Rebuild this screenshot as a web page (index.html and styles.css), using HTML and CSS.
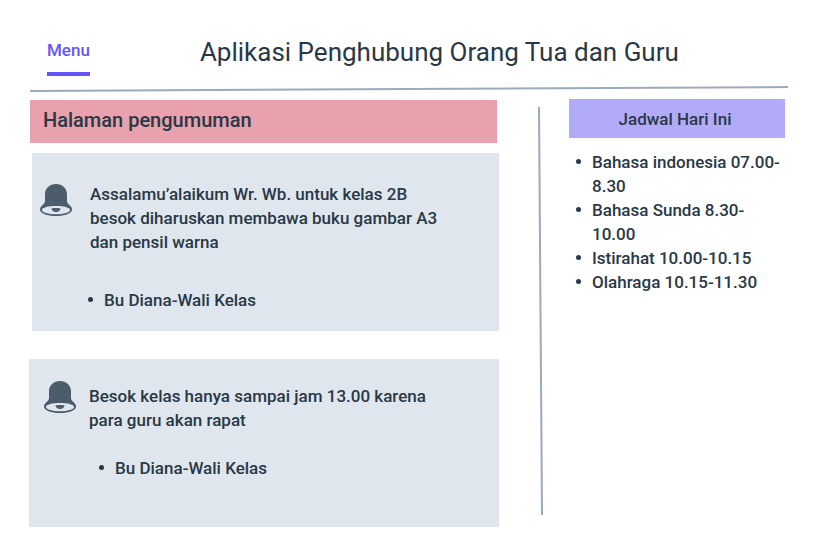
FILE: index.html
```html
<!DOCTYPE html>
<html lang="id">
<head>
  <meta charset="utf-8">
  <meta name="viewport" content="width=device-width, initial-scale=1">
  <title>Aplikasi Penghubung Orang Tua dan Guru</title>
  <link rel="stylesheet" href="styles.css">
</head>
<body>
  <svg class="symbols" aria-hidden="true">
    <symbol id="bell" viewBox="0 0 32 32">
      <path fill-rule="evenodd" d="M16 0C9.500 0 5 4.500 5 10.500V17C5 19 3.600 20 2 21.500C.7 22.700 0 24 0 25.500C0 29.500 7 32 16 32S32 29.500 32 25.500C32 24 31.300 22.700 30 21.500C28.400 20 27 19 27 17V10.500C27 4.500 22.500 0 16 0ZM16 22C23.500 22 30 23.500 30 26S23.500 30.300 16 30.300S2 28.500 2 26S8.500 22 16 22Z"/>
      <path d="M11.500 24.300Q16 23.500 20.500 24.300C20.500 26.600 18.500 28 16 28S11.500 26.600 11.500 24.300Z"/>
    </symbol>
  </svg>

  <header class="header">
    <nav><a class="menu" href="#">Menu</a></nav>
    <h1 class="title">Aplikasi Penghubung Orang Tua dan Guru</h1>
  </header>
  <svg class="rule" viewBox="0 0 758 6" preserveAspectRatio="none" aria-hidden="true">
    <line x1="0" y1="5" x2="758" y2="1"/>
  </svg>

  <main class="content">
    <section class="news">
      <h2 class="news-title">Halaman pengumuman</h2>
      <article class="card card-first">
        <svg class="bell" aria-hidden="true"><use href="#bell"/></svg>
        <div class="card-body">
          <p>Assalamu’alaikum Wr. Wb. untuk kelas 2B besok diharuskan membawa buku gambar A3 dan pensil warna</p>
          <ul class="list author"><li>Bu Diana-Wali Kelas</li></ul>
        </div>
      </article>
      <article class="card card-second">
        <svg class="bell" aria-hidden="true"><use href="#bell"/></svg>
        <div class="card-body">
          <p>Besok kelas hanya sampai jam 13.00 karena para guru akan rapat</p>
          <ul class="list author"><li>Bu Diana-Wali Kelas</li></ul>
        </div>
      </article>
    </section>
    <svg class="divider" viewBox="0 0 6 408" preserveAspectRatio="none" aria-hidden="true">
      <line x1="1" y1="0" x2="4" y2="408"/>
    </svg>
    <aside class="schedule">
      <h2 class="schedule-title">Jadwal Hari Ini</h2>
      <ul class="list">
        <li>Bahasa indonesia 07.00-&#8203;8.30</li>
        <li>Bahasa Sunda 8.30-&#8203;10.00</li>
        <li>Istirahat 10.00-10.15</li>
        <li>Olahraga 10.15-11.30</li>
      </ul>
    </aside>
  </main>
</body>
</html>
```
FILE: styles.css
```css
* {
  box-sizing: border-box;
}

body {
  margin: 0;
  background: #fff;
  color: #293845;
  font: 500 17px/24px Roboto, "Liberation Sans", sans-serif;
}

h1, h2, p, ul {
  margin: 0;
  padding: 0;
}

.symbols {
  position: absolute;
  width: 0;
  height: 0;
}

.header {
  display: flex;
  align-items: flex-start;
  gap: 110px;
  padding: 36px 32px 10px 47px;
}

.menu {
  display: block;
  padding: 2px 0 10px;
  border-bottom: 4px solid #6554f5;
  color: #6554f5;
  text-decoration: none;
}

.title {
  font-size: 26px;
  font-weight: 400;
  line-height: 32px;
}

.rule {
  display: block;
  width: calc(100% - 62px);
  height: 6px;
  margin-left: 30px;
}

.rule line,
.divider line {
  stroke: #9dabb9;
  stroke-width: 2;
}

.content {
  display: grid;
  grid-template-columns: minmax(0, 1fr) 6px 216px;
  column-gap: 25px;
  padding: 7px 35px 22px 29px;
}

.news {
  margin: 1px 14px 0 0;
}

.news-title {
  margin: 0 2px 10px 1px;
  padding: 4px 13px 7px;
  background: #e9a1ad;
  font-size: 20px;
  font-weight: 500;
  line-height: 32px;
}

.card {
  display: flex;
  background: #dfe6ee;
}

.card-first {
  min-height: 178px;
  margin: 0 0 28px 3px;
  padding: 29px 48px 18px 8px;
  gap: 18px;
}

.card-second {
  min-height: 168px;
  padding: 22px 48px 46px 15px;
  gap: 13px;
}

.bell {
  flex: none;
  width: 32px;
  height: 32px;
  fill: #4b5c6b;
}

.card-first .bell {
  margin-top: 2px;
}

.card-body {
  flex: 1;
}

.card-second .card-body {
  padding-top: 3px;
}

.list {
  padding-left: 23px;
  list-style: none;
}

.list li::before {
  content: "";
  float: left;
  width: 5px;
  height: 5px;
  margin: 9px 0 0 -16px;
  border-radius: 50%;
  background: #293845;
}

.author {
  margin-top: 34px;
  padding-left: 14px;
}

.card-second .author {
  margin-top: 24px;
  padding-left: 26px;
}

.divider {
  width: 6px;
  height: calc(100% - 20px);
  margin-top: 8px;
}

.schedule-title {
  margin-bottom: 12px;
  padding: 8px 4px 7px 0;
  background: #b2abfa;
  font-size: 17px;
  font-weight: 500;
  text-align: center;
}
```
